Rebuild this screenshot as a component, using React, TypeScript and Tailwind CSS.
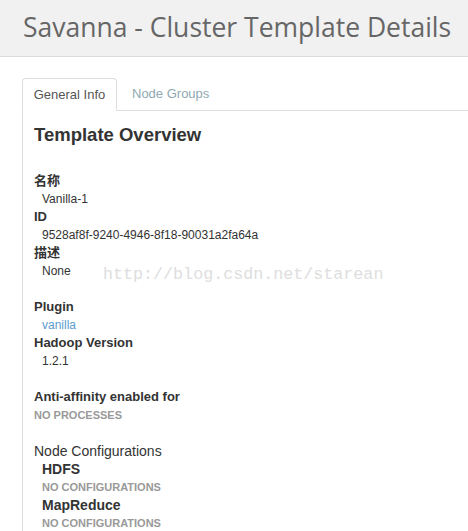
import React from "react"

const Field = ({ label, children }: { label: string; children: React.ReactNode }) => (
    <>
        <dt className="text-[13px] font-bold leading-[18px] text-[#333]">{label}</dt>
        <dd className="ml-2 text-[12px] leading-[18px] text-[#333]">{children}</dd>
    </>
)

const App = () => {
    return (
        <div className="relative h-[531px] w-[468px] overflow-hidden bg-white font-['Liberation_Sans',Arial,'Noto_Sans_CJK_SC',sans-serif]">
            <header className="flex h-[57px] items-center border-b border-[#dcdcdc] bg-[#f1f1f1] pl-[23px]">
                <h1 className="font-['Open_Sans',sans-serif] text-[26.5px] leading-none text-[#666] -mt-[2px]">
                    Savanna - Cluster Template Details
                </h1>
            </header>

            <div className="pl-[22px] pt-[21px]">
                <ul className="flex h-[33px] border-b border-[#ddd]">
                    <li className="-mb-px flex w-[95px] items-center justify-center rounded-t-[4px] border border-b-white border-[#ddd] bg-white text-[13px] text-[#555]">
                        General Info
                    </li>
                    <li className="flex items-center pl-[15px] text-[13px] text-[#8fa9b2]">Node Groups</li>
                </ul>

                <div className="border-l border-[#ddd] pl-[11px]">
                    <h3 className="pt-[13px] text-[18.5px] font-bold leading-[22px] text-[#333]">Template Overview</h3>

                    <dl className="mt-[26px]">
                        <Field label="名称">Vanilla-1</Field>
                        <Field label="ID">9528af8f-9240-4946-8f18-90031a2fa64a</Field>
                        <Field label="描述">None</Field>
                    </dl>

                    <dl className="mt-[18px]">
                        <Field label="Plugin">
                            <span className="text-[#5b9bd1]">vanilla</span>
                        </Field>
                        <Field label="Hadoop Version">1.2.1</Field>
                    </dl>

                    <dl className="mt-[18px]">
                        <dt className="text-[13px] font-bold leading-[18px] text-[#333]">Anti-affinity enabled for</dt>
                        <dd className="text-[11px] font-bold leading-[18px] text-[#999]">NO PROCESSES</dd>
                    </dl>

                    <div className="mt-[18px]">
                        <h4 className="text-[14px] leading-[18px] text-[#333]">Node Configurations</h4>
                        <dl className="ml-2">
                            <dt className="text-[14px] font-bold leading-[18px] text-[#333]">HDFS</dt>
                            <dd className="text-[11px] font-bold leading-[18px] text-[#999]">NO CONFIGURATIONS</dd>
                            <dt className="text-[14px] font-bold leading-[18px] text-[#333]">MapReduce</dt>
                            <dd className="text-[11px] font-bold leading-[18px] text-[#999]">NO CONFIGURATIONS</dd>
                        </dl>
                    </div>
                </div>
            </div>

            <div className="pointer-events-none absolute left-[103px] top-[264px] font-['Liberation_Mono',monospace] text-[16.7px] leading-[22px] text-[#dedede]">
                http://blog.csdn.net/starean
            </div>
        </div>
    )
}

export default App
